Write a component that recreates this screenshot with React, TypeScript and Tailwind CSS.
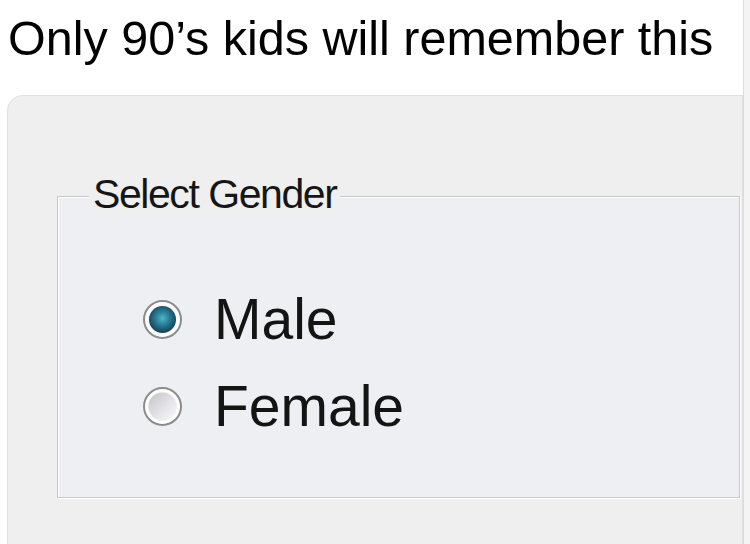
import React from 'react';

const Radio: React.FC<{ checked?: boolean; id: string }> = ({ checked, id }) => (
  <svg width="41" height="41" viewBox="0 0 41 41" className="shrink-0">
    <defs>
      <radialGradient id={`${id}-dot`} cx="50%" cy="45%" r="55%">
        <stop offset="0%" stopColor="#4fb6c9" />
        <stop offset="45%" stopColor="#2a7f98" />
        <stop offset="100%" stopColor="#143f55" />
      </radialGradient>
      <linearGradient id={`${id}-well`} x1="0" y1="0" x2="1" y2="1">
        <stop offset="0%" stopColor="#c4c4c8" />
        <stop offset="60%" stopColor="#e6e6ea" />
        <stop offset="100%" stopColor="#fafafa" />
      </linearGradient>
    </defs>
    <circle cx="20.5" cy="20.5" r="18.5" fill="#f7f7f9" stroke="#8c8c8f" strokeWidth="2" />
    <circle cx="20.5" cy="20.5" r="16" fill="none" stroke="#ffffff" strokeWidth="2" />
    {checked ? (
      <circle cx="20.5" cy="20.5" r="13.5" fill={`url(#${id}-dot)`} />
    ) : (
      <circle cx="20.5" cy="20.5" r="14" fill={`url(#${id}-well)`} />
    )}
  </svg>
);

const App: React.FC = () => {
  return (
    <div className="w-[750px] h-[544px] bg-white flex overflow-hidden font-['Liberation_Sans',Arial,sans-serif] text-black">
      <div className="w-[743px] flex flex-col">
        {/* caption */}
        <div className="h-[95px] pl-[8px] pt-[14px] text-[48.5px] leading-none whitespace-nowrap">
          Only 90’s kids will remember this
        </div>

        {/* dialog panel */}
        <div className="ml-[7px] flex-1 bg-[#efefef] rounded-tl-[16px] border-l border-t border-r border-[#e0e0e0] pt-[100px] pl-[49px] pr-[2px]">
          <div className="h-[302px] border border-[#c8c8cb] bg-[#eeeff3] shadow-[inset_1px_1px_0_#ffffff,1px_1px_0_#ffffff] flex flex-col">
            <span className="self-start -mt-[23px] ml-[31px] px-[4px] bg-[#efefef] text-[41px] leading-none tracking-[-0.035em] text-[#161616] whitespace-nowrap">
              Select Gender
            </span>

            <div className="mt-[76px] pl-[84px] flex flex-col gap-[30px]">
              <label className="flex items-center gap-[31px] h-[57px]">
                <Radio checked id="male" />
                <span className="text-[57px] leading-none text-[#141414]">Male</span>
              </label>
              <label className="flex items-center gap-[31px] h-[57px]">
                <Radio id="female" />
                <span className="text-[57px] leading-none text-[#141414]">Female</span>
              </label>
            </div>
          </div>
        </div>
      </div>
      <div className="flex-1 bg-[#f4f4f4] border-l border-[#dcdcdc]" />
    </div>
  );
};

export default App;
